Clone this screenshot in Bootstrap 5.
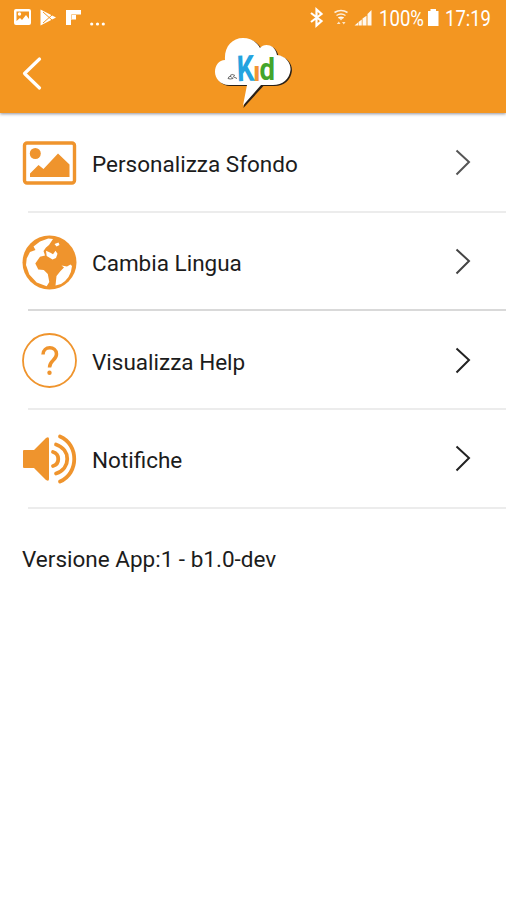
<!DOCTYPE html>
<html lang="it">
<head>
<meta charset="utf-8">
<meta name="viewport" content="width=device-width, initial-scale=1">
<title>Impostazioni</title>
<link href="https://cdn.jsdelivr.net/npm/bootstrap@5.3.0/dist/css/bootstrap.min.css" rel="stylesheet">
<style>
:root{--kid-orange:#f39621}
body{font-family:Roboto,"Liberation Sans",sans-serif;color:#1c1c1c;font-size:22.500px;line-height:28px;min-height:900px}
svg{display:block;flex:none}
.app-head{background:var(--kid-orange);height:112.5px;box-shadow:0 1px 3px rgba(70,70,90,.6)}
.status{height:36px;padding:0 8px 0 13px}
.title-bar{height:76px;display:grid;grid-template-columns:215px 80px 1fr}
.back{margin:20px 0 0 22px}
.menu{padding-top:.5px}
.menu-row{height:98.7px;padding:2px 0 0 22px;color:inherit;text-decoration:none}
.menu-label{margin-left:15px;padding-top:2px}
.menu-arrow{margin-right:35px}
.rule{height:2px;margin:-1px 0 -1px 28px;background:#ececec}
.rule-dark{background:#d9d9d9}
.version{padding:37px 22px}
</style>
<script src="https://cdn.jsdelivr.net/npm/bootstrap@5.3.0/dist/js/bootstrap.bundle.min.js"></script>
</head>
<body class="bg-white">
<header class="app-head position-relative">
  <div class="status d-flex justify-content-between">
    <svg width="94" height="36" viewBox="13 0 94 36" fill="#fff">
      <path fill-rule="evenodd" d="M16 9h13q2 0 2 2v12q0 2-2 2H16q-2 0-2-2V11q0-2 2-2zM16.500 11.500V21l3.500-3 2 2 4-5 3 4v-7.500z"/><circle cx="19.500" cy="14" r="1.700"/>
      <path d="M40.500 9.500L56 17.500 40.500 25.500z"/><path d="M43 12l9 8M43 23l9-8" stroke="#f39721" stroke-width="1"/>
      <path d="M66 10h15v5h-5v4.500h-5V25h-5z"/><path d="M71.500 14.500H81M71.500 14.500V20" stroke="#f9cb90" fill="none"/>
      <circle cx="91.700" cy="24" r="1.600"/><circle cx="97.500" cy="24" r="1.600"/><circle cx="103.300" cy="24" r="1.600"/>
    </svg>
    <svg width="190" height="36" viewBox="308 0 190 36" fill="#fff">
      <path d="M311 13l10.500 8-5 4.500v-16l5 4.500-10.500 8" fill="none" stroke="#fff" stroke-width="2.200"/>
      <g fill="none" stroke="#fff" stroke-width="1.500" opacity=".85"><path d="M334.500 12.500q6.500-4 13 0M336.500 15.500q4.500-3 9 0M338.500 18q2.500-1.600 5 0"/></g>
      <path d="M338 17h6l-3 3.500zM336.800 24l2-2.500 1.800 2.500zM342 22h3.500l-1.700 2.500z" opacity=".75"/>
      <path d="M354.500 25.500l3.500-3v3zM358.500 22l3.300-2.500v6h-3.300zM362.500 18.500l4-2.700v9.700h-4zM367.500 14l4-4v15.500h-4z" opacity=".93"/>
      <text x="379" y="25.500" font-size="21.500" textLength="45" lengthAdjust="spacingAndGlyphs">100%</text>
      <path d="M428 11h2.500V9h5.500v2h2.500v15H428z"/>
      <text x="445" y="25.500" font-size="21.500" textLength="46" lengthAdjust="spacingAndGlyphs">17:19</text>
    </svg>
  </div>
  <div class="title-bar">
    <a href="#" class="back" aria-label="Indietro"><svg width="22" height="36" viewBox="0 0 22 36" fill="none" stroke="#fff" stroke-width="3.200" stroke-linecap="round" stroke-linejoin="round"><path d="M17.500 3L2.500 17.500l15 14.500"/></svg></a>
    <svg width="80" height="76" viewBox="215 36 80 76">
      <path fill="#2a2118" transform="translate(1.400 1)" d="M225 60C224 47 232 38 243 38c8 0 14 4 17 10 4-5 15-4 17 7 9 1 14 8 13.500 15-1 9-8 15-17.500 15h-11l-20 22L247 85h-18c-9 0-14-7-14-13 0-7 4-12 10-12z"/>
      <path fill="#fff" d="M225 60C224 47 232 38 243 38c8 0 14 4 17 10 4-5 15-4 17 7 9 1 14 8 13.500 15-1 9-8 15-17.500 15h-12l-18 20.500L247 85h-18c-9 0-14-7-14-13 0-7 4-12 10-12z"/>
      <g font-family="Roboto,sans-serif" font-weight="700">
        <text x="236.800" y="81" font-size="36" fill="#24a3df" textLength="17.500" lengthAdjust="spacingAndGlyphs" transform="rotate(-2 245 70)">K</text>
        <text x="253" y="81" font-size="27" fill="#f39335" textLength="7.500" lengthAdjust="spacingAndGlyphs">ı</text>
        <text x="259.500" y="80" font-size="30.500" fill="#43a52c" textLength="15.500" lengthAdjust="spacingAndGlyphs">d</text>
      </g>
      <path d="M228 78.500q1-3 3-2l2 2q-3 1-5 0zM230 75.500q2-2 5 0M233 76.500q2 1 4 2" fill="none" stroke="#666" stroke-width="1"/>
    </svg>
  </div>
</header>
<main class="menu">
  <a href="#" class="menu-row d-flex align-items-center">
    <svg width="55" height="46" viewBox="0 0 55 46"><rect x="2.500" y="3" width="50" height="40" rx="2.500" fill="none" stroke="#ef942d" stroke-width="3.400"/><circle cx="13.300" cy="13.500" r="5.500" fill="#ef942d"/><path d="M8 37v-3.500l8.500-8.500 5 4L36 13.500 47.500 24.500v12.500z" fill="#ef942d"/></svg>
    <span class="menu-label">Personalizza Sfondo</span>
    <svg class="menu-arrow ms-auto" width="16" height="28" viewBox="0 0 16 28" fill="none" stroke="#555" stroke-width="2"><path d="M1.500 1.500L14 13l-12.500 12.500"/></svg>
  </a>
  <div class="rule"></div>
  <a href="#" class="menu-row d-flex align-items-center">
    <svg width="55" height="55" viewBox="0 0 55 55"><circle cx="27.500" cy="27.500" r="27" fill="#ef942d"/><g fill="#fff"><path d="M26.300 3.500L18 6.500l-6.500 5 2 3.500-5.500 2-3.300 6.500L4 30l3.300 9.500 7.400 8 10 3.700 2.600-4.200-1.500-8-4-4-5.500-.5-3-6 4.700-6.700 5-1.300-1.500-4.500 2.500-3.500 3-2.500 4-6z"/><path d="M24 15.800l4.500 2 2.500 1.500 2.500-3.500 2 3-1.500 4.200-3.500 1.500-5.800-3.500zM32.500 9l2 2.500 3-1.500-1-2.500z"/><path d="M39.500 30.500l5.500 1 3.500-2 1.500 1.500q-1 12-11 18l-5.500 1.500 1-9.500 4-5 3.500-3.500z"/></g></svg>
    <span class="menu-label">Cambia Lingua</span>
    <svg class="menu-arrow ms-auto" width="16" height="28" viewBox="0 0 16 28" fill="none" stroke="#444" stroke-width="2"><path d="M1.500 1.500L14 13l-12.500 12.500"/></svg>
  </a>
  <div class="rule rule-dark"></div>
  <a href="#" class="menu-row d-flex align-items-center">
    <svg width="55" height="55" viewBox="0 0 55 55" fill="none" stroke="#ef942d"><circle cx="27.500" cy="27.500" r="26.500" stroke-width="1.800"/><path d="M21 21.500c0-9 13.500-9 13.500-.5 0 6.500-7 6-7 13.500" stroke-width="3.500"/><circle cx="27.500" cy="39.700" r="2.200" fill="#ef942d" stroke="none"/></svg>
    <span class="menu-label">Visualizza Help</span>
    <svg class="menu-arrow ms-auto" width="16" height="28" viewBox="0 0 16 28" fill="none" stroke="#222" stroke-width="2"><path d="M1.500 1.500L14 13l-12.500 12.500"/></svg>
  </a>
  <div class="rule"></div>
  <a href="#" class="menu-row d-flex align-items-center">
    <svg width="55" height="52" viewBox="0 0 55 52"><path fill="#ef942d" d="M2 17h10L24 5q3-2 3 1v40q0 3-3 1L12 35H2q-1 0-1-1V18q0-1 1-1z"/><g fill="none" stroke="#ef942d" stroke-width="3.800" stroke-linecap="round"><path d="M31 19c7 2 7 12 0 14M34 11.500c15 5 15 24 0 29M38 3.500c19 8 19 37 0 45"/></g></svg>
    <span class="menu-label">Notifiche</span>
    <svg class="menu-arrow ms-auto" width="16" height="28" viewBox="0 0 16 28" fill="none" stroke="#222" stroke-width="2"><path d="M1.500 1.500L14 13l-12.500 12.500"/></svg>
  </a>
  <div class="rule"></div>
  <div class="version">Versione App:1 - b1.0-dev</div>
</main>
</body>
</html>
